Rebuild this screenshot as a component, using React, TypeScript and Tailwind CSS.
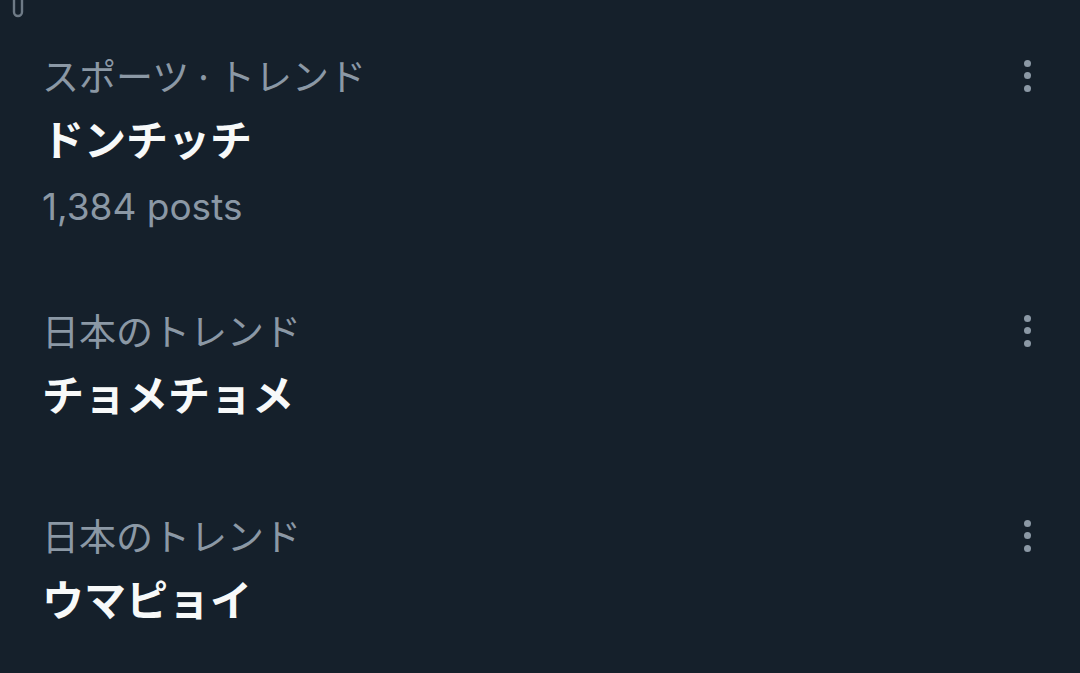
import React from "react";

type Trend = { label: React.ReactNode; title: string; posts?: string };

const trends: Trend[] = [
  {
    label: (
      <>
        スポーツ<span className="mx-[4px]">·</span>トレンド
      </>
    ),
    title: "ドンチッチ",
    posts: "1,384 posts",
  },
  { label: "日本のトレンド", title: "チョメチョメ" },
  { label: "日本のトレンド", title: "ウマピョイ" },
];

function Dots() {
  return (
    <div className="flex flex-col items-center gap-[5.5px] pt-[1px]">
      <span className="block w-[7px] h-[7px] rounded-full bg-[#8b98a5]" />
      <span className="block w-[7px] h-[7px] rounded-full bg-[#8b98a5]" />
      <span className="block w-[7px] h-[7px] rounded-full bg-[#8b98a5]" />
    </div>
  );
}

export default function App() {
  return (
    <div
      className="w-[1080px] h-[673px] overflow-hidden bg-[#15202b]"
      style={{ fontFamily: '"Noto Sans CJK JP", "Noto Sans", sans-serif' }}
    >
      <div className="h-[18px] pl-[12px]">
        <svg width="12" height="18" viewBox="0 0 12 18" fill="none">
          <path d="M2 0 V12 a4 4 0 0 0 8 0 V0" stroke="#6e7a86" strokeWidth="2.4" />
        </svg>
      </div>
      {trends.map((t, i) => (
        <div
          key={i}
          className={`flex pl-[42px] pr-[46px] pb-[23px] ${i === 0 ? "pt-[34px]" : "pt-[52px]"}`}
        >
          <div className="flex-1 flex flex-col">
            <div className="leading-[46px] text-[37px] text-[#8b98a5]">{t.label}</div>
            <div className="mt-[12px] mb-[16px] leading-[56px] text-[42px] font-bold text-[#f7f9f9]">{t.title}</div>
            {t.posts && (
              <div
                className="leading-[50px] text-[37px] text-[#8b98a5]"
                style={{ fontFamily: 'Inter, "Noto Sans", sans-serif' }}
              >
                {t.posts}
              </div>
            )}
          </div>
          <div className="w-[14px] h-[46px] flex items-center justify-center">
            <Dots />
          </div>
        </div>
      ))}
    </div>
  );
}
